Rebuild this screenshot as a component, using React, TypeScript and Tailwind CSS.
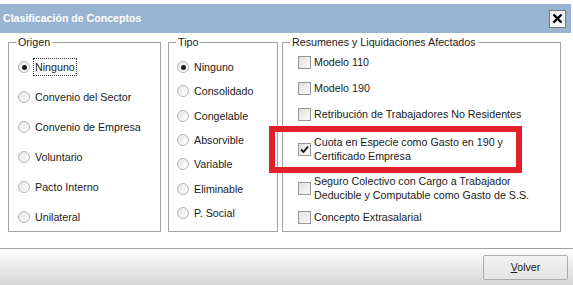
import React from "react"

const origen = ["Ninguno", "Convenio del Sector", "Convenio de Empresa", "Voluntario", "Pacto Interno", "Unilateral"]
const tipo = ["Ninguno", "Consolidado", "Congelable", "Absorvible", "Variable", "Eliminable", "P. Social"]

const resumenes = [
  { lines: ["Modelo 110"], h: "h-[26px]", checked: false },
  { lines: ["Modelo 190"], h: "h-[26px]", checked: false },
  { lines: ["Retribución de Trabajadores No Residentes"], h: "h-[26px]", checked: false },
  { lines: ["Cuota en Especie como Gasto en 190 y", "Certificado Empresa"], h: "h-[44px]", checked: true },
  { lines: ["Seguro Colectivo con Cargo a Trabajador", "Deducible y Computable como Gasto de S.S."], h: "h-[34px]", checked: false },
  { lines: ["Concepto Extrasalarial"], h: "h-[24px]", checked: false },
]

function Radio({ checked }: { checked?: boolean }) {
  return (
    <span className="flex h-[12px] w-[12px] shrink-0 items-center justify-center rounded-full border border-[#b4b4b4] bg-gradient-to-br from-[#e6e6e6] to-white">
      {checked && <span className="h-[5px] w-[5px] rounded-full bg-[#1a1a1a]" />}
    </span>
  )
}

function Checkbox({ checked }: { checked?: boolean }) {
  return (
    <span className="flex h-[13px] w-[13px] shrink-0 items-center justify-center border border-[#979797] bg-gradient-to-br from-[#e0e0e0] to-[#fafafa]">
      {checked && (
        <svg width="9" height="9" viewBox="0 0 9 9">
          <path d="M1 4.5 L3.5 7 L8 1.5" fill="none" stroke="#111" strokeWidth="1.8" />
        </svg>
      )}
    </span>
  )
}

function GroupBox({ title, className, children }: { title: string; className: string; children: React.ReactNode }) {
  return (
    <div className={`relative h-[190px] border border-[#a3a3a3] ${className}`}>
      <span className="absolute -top-[8px] left-[7px] bg-white px-[2px] leading-[14px]">{title}</span>
      {children}
    </div>
  )
}

export default function App() {
  return (
    <div className="relative flex h-[285px] w-[573px] flex-col bg-white pt-[4px] font-['Liberation_Sans',Arial,sans-serif] text-[10.7px] text-[#1a1a1a]">
      {/* title bar */}
      <div className="mr-[2px] flex h-[29px] items-center justify-between bg-[#99b4d1] pl-[3px] pr-[5px]">
        <span className="text-[10.6px] font-bold text-white">Clasificación de Conceptos</span>
        <button className="flex h-[18px] w-[17px] items-center justify-center border border-[#777] bg-[#f4f4f4]">
          <svg width="11" height="11" viewBox="0 0 11 11">
            <path d="M1.5 1.5 L9.5 9.5 M9.5 1.5 L1.5 9.5" stroke="#000" strokeWidth="2.4" />
          </svg>
        </button>
      </div>

      {/* body */}
      <div className="flex h-[215px] gap-[7px] px-[8px] pt-[9px]">
        <GroupBox title="Origen" className="w-[153px]">
          <div className="flex flex-col pl-[9px] pt-[9px]">
            {origen.map((o, i) => (
              <div key={o} className="flex h-[30px] items-center gap-[4px]">
                <Radio checked={i === 0} />
                <span className={i === 0 ? "outline outline-1 outline-dotted outline-[#333] px-[1px]" : "px-[1px]"}>{o}</span>
              </div>
            ))}
          </div>
        </GroupBox>

        <GroupBox title="Tipo" className="w-[110px]">
          <div className="flex flex-col pl-[8px] pt-[12px]">
            {tipo.map((t, i) => (
              <div key={t} className="flex h-[24.3px] items-center gap-[5px]">
                <Radio checked={i === 0} />
                <span>{t}</span>
              </div>
            ))}
          </div>
        </GroupBox>

        <GroupBox title="Resumenes y Liquidaciones Afectados" className="-ml-[3px] w-[279px]">
          <div className="flex flex-col pl-[15px] pt-[6px]">
            {resumenes.map((r) => (
              <div key={r.lines[0]} className={`flex items-center gap-[3px] ${r.h}`}>
                <Checkbox checked={r.checked} />
                <span className="flex flex-col leading-[14px]">
                  {r.lines.map((l) => (
                    <span key={l}>{l}</span>
                  ))}
                </span>
              </div>
            ))}
          </div>
        </GroupBox>
      </div>

      {/* footer */}
      <div className="flex flex-1 items-start justify-end border-t border-[#a0a0a0] bg-gradient-to-b from-white to-[#d5d5d5] pr-[5px] pt-[6px]">
        <button className="flex h-[25px] w-[85px] items-center justify-center rounded-[2px] border border-[#acacac] bg-gradient-to-b from-[#f2f2f2] to-[#e3e3e3]">
          <span>
            <span className="underline">V</span>olver
          </span>
        </button>
      </div>

      {/* red highlight annotation */}
      <div className="absolute left-[269px] top-[126px] h-[47px] w-[253px] border-[6px] border-[#e3202a]" />
    </div>
  )
}
